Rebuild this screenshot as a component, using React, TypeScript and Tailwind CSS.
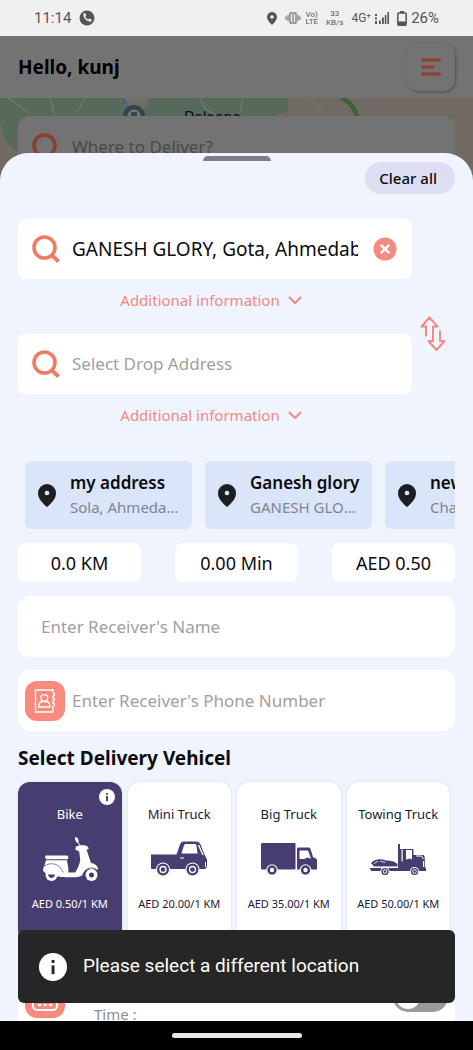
import { useState } from 'react';
import type { ReactNode } from 'react';

const savedAddresses = [
  { name: 'my address', detail: 'Sola, Ahmedabad, Gujarat' },
  { name: 'Ganesh glory', detail: 'GANESH GLORY, Gota' },
  { name: 'new home', detail: 'Chandkheda, Ahmedabad' },
];

const stats = ['0.0 KM', '0.00 Min', 'AED 0.50'];

const vehicles = [
  { name: 'Bike', price: 'AED 0.50/1 KM', icon: <ScooterIcon /> },
  { name: 'Mini Truck', price: 'AED 20.00/1 KM', icon: <MiniTruckIcon /> },
  { name: 'Big Truck', price: 'AED 35.00/1 KM', icon: <BigTruckIcon /> },
  { name: 'Towing Truck', price: 'AED 50.00/1 KM', icon: <TowTruckIcon /> },
];

function ScooterIcon() {
  return (
    <svg viewBox="0 0 56 46" className="h-[46px] w-[56px]" fill="currentColor" aria-hidden="true">
      {/* mirror + handlebar */}
      <path d="M33 1.500c2-.8 3.600 1 3.700 4.500l-.9 1.200C34 6 32.700 4 33 1.500z" />
      <path d="M35.500 6l3 4" stroke="currentColor" strokeWidth="1" />
      <path d="M34 10.500c3-1.500 7-1.500 9.500-1 2 .5 3 1.500 3 3.500l-2 .5 4.500 13.500c4 .5 7 3 7.200 6.500l-9-.5c-4 .5-6 3-7 6.500-3 2-10 2-22 1.500l-2-5 12 .5h5c2-3 5-9 5-13l-1-8-4-2z" />
      {/* seat */}
      <path d="M3.500 19.500h21c1.800 0 2.500 2 1.200 3.800H4.500c-1.500-1-1.500-2.700-1-3.800z" />
      <path d="M4 24.300h21l1.500 9.500c0 4-2 6-5 7L7 40l-6-5c0-2 .5-4 1.500-6z" />
      <path d="M2 30.500c5-4.500 16-4 19 6" fill="none" stroke="#483d71" strokeWidth=".7" />
      <circle cx="9.500" cy="39" r="6" />
      <path d="M6 38.500h7c-.5 4.500-6.500 4.500-7 0z" fill="#483d71" />
      <circle cx="49.500" cy="39" r="6" />
      <circle cx="49.500" cy="39" r="2.500" fill="#483d71" />
      <path d="M42 38c1-5 5-7.500 12-5" fill="none" stroke="#483d71" strokeWidth=".8" />
    </svg>
  );
}

function MiniTruckIcon() {
  return (
    <svg viewBox="0 0 56 36" className="h-[36px] w-[56px]" fill="currentColor" aria-hidden="true">
      <path d="M0 13.500h25.500L29 3.500C29.700 1.500 31 .5 33 .5h12c2.500 0 3.500 1 4.500 3l4 10 2.500 5v5c0 3-1 4.500-3 4.500H1c-.6 0-1-.4-1-1z" />
      <path d="M30.500 12.500l2.400-8c.3-1 .8-1.500 1.900-1.500h9.200c1 0 1.400.5 1.400 1.500l1.200 8z" fill="#fff" />
      <path d="M47.500 4l4.500 10" stroke="#fff" strokeWidth="1.400" />
      <path d="M29 17h4" stroke="#fff" strokeWidth="1" />
      <path d="M54.500 21v5" stroke="#fff" strokeWidth="1" />
      <circle cx="12" cy="28.500" r="7" fill="#fff" />
      <circle cx="12" cy="28.500" r="6" />
      <circle cx="12" cy="28.500" r="3" fill="none" stroke="#fff" strokeWidth="1.300" />
      <circle cx="41.500" cy="28.500" r="7" fill="#fff" />
      <circle cx="41.500" cy="28.500" r="6" />
      <circle cx="41.500" cy="28.500" r="3" fill="none" stroke="#fff" strokeWidth="1.300" />
    </svg>
  );
}

function BigTruckIcon() {
  return (
    <svg viewBox="0 0 56 32" className="h-[32px] w-[56px]" fill="currentColor" aria-hidden="true">
      <rect width="34.500" height="26.500" rx="1.200" />
      <path d="M36 26.500V6c0-1 .5-1.500 1.500-1.500h10c1 0 1.500.4 1.900 1.300L52 14l3 1.500c.7.400 1 1 1 1.500v8.500c0 .6-.4 1-1 1z" />
      <path d="M38.500 7.500h8.500l3 8-4-1-2.500 1.500h-5z" fill="#fff" />
      <circle cx="11" cy="27" r="5.800" fill="#fff" />
      <circle cx="11" cy="27" r="4.700" />
      <circle cx="11" cy="27" r="2.200" fill="#fff" />
      <circle cx="44.500" cy="27" r="5.800" fill="#fff" />
      <circle cx="44.500" cy="27" r="4.700" />
      <circle cx="44.500" cy="27" r="2.200" fill="#fff" />
    </svg>
  );
}

function TowTruckIcon() {
  return (
    <svg viewBox="0 0 56 33" className="h-[33px] w-[56px]" fill="currentColor" aria-hidden="true">
      <path d="M0 25h28V1h2v5h12c1 0 1.500.5 1.500 1.500V12H53c1 0 1.500 1 1.800 3v9.500H56V28H1z" />
      <path d="M1 20c4-4 9-4.500 15-2.500 5 0 9 1 11.500 3.500v2.500H4z" />
      <path d="M4 20.500l4-2.300M10 18l5 1.500" stroke="#fff" strokeWidth=".8" />
      <path d="M0 24.300h28" stroke="#fff" strokeWidth=".8" />
      <rect x="31.500" y="6.500" width="1.200" height="12" fill="#fff" />
      <path d="M36 7h6v9.500l-2-1-4 1z" fill="#fff" />
      <path d="M46 13h5.500l2 3M53.500 18v6" fill="none" stroke="#fff" strokeWidth="1" />
      <circle cx="15" cy="28.500" r="4.500" fill="#fff" />
      <circle cx="15" cy="28.500" r="3.600" />
      <circle cx="15" cy="28.500" r="1.800" fill="none" stroke="#fff" strokeWidth="1" />
      <circle cx="44.500" cy="28.500" r="4.500" fill="#fff" />
      <circle cx="44.500" cy="28.500" r="3.600" />
      <circle cx="44.500" cy="28.500" r="1.800" fill="none" stroke="#fff" strokeWidth="1" />
    </svg>
  );
}

function SearchIcon({ className }: { className: string }) {
  return (
    <svg viewBox="0 0 28 28" className={`h-7 w-7 shrink-0 ${className}`} fill="none" stroke="currentColor" aria-hidden="true">
      <circle cx="12.500" cy="12.500" r="10.500" strokeWidth="3.600" />
      <path d="M19.500 20l7 6.500" strokeWidth="4" />
    </svg>
  );
}

function InfoIcon({ className }: { className: string }) {
  return (
    <svg viewBox="0 0 28 28" className={className} aria-hidden="true">
      <circle cx="14" cy="14" r="14" fill="#fff" />
      <rect x="12.600" y="7" width="2.900" height="2.900" fill="#262626" />
      <rect x="12.600" y="12.400" width="2.900" height="8.800" fill="#262626" />
    </svg>
  );
}

function PinIcon() {
  return (
    <svg viewBox="0 0 18 23" className="h-[23px] w-[18px] shrink-0" aria-hidden="true">
      <path d="M9 0a9 9 0 0 0-9 9c0 6 5 10.500 9 14 4-3.500 9-8 9-14a9 9 0 0 0-9-9z" fill="#1d1e22" />
      <circle cx="9" cy="9" r="2.300" fill="#dae5f9" />
    </svg>
  );
}

function StatusBar() {
  return (
    <div className="flex h-9 shrink-0 items-center justify-between bg-[#f0f0f0] pr-[34px] pl-[34px] font-['Roboto',sans-serif] text-[#555]">
      <div className="flex items-center gap-2">
        <span className="text-[15px]">11:14</span>
        <svg viewBox="0 0 16 16" className="h-4 w-4" aria-hidden="true">
          <circle cx="8" cy="8" r="7.500" fill="#555" />
          <path d="M4.500 3.500l1.800-.4 1 2.300-1.100 1.200c.7 1.400 1.600 2.300 3 3l1.200-1.100 2.300 1-.3 1.900c-4.500.9-8.700-3.400-7.900-7.900z" fill="#f0f0f0" />
        </svg>
      </div>
      <div className="flex items-center gap-1">
        <svg viewBox="0 0 10 13" className="mr-1 h-[13px] w-[10px]" aria-hidden="true">
          <path d="M5 0a5 5 0 0 0-5 5c0 3 3 6 5 8 2-2 5-5 5-8a5 5 0 0 0-5-5z" fill="#555" />
          <circle cx="5" cy="5" r="1.800" fill="#f0f0f0" />
        </svg>
        <svg viewBox="0 0 16 12" className="h-3 w-4" fill="none" stroke="#555" aria-hidden="true">
          <rect x="5" y="1" width="6" height="10" />
          <path d="M7 3h2M7 5h2M7 7h2M7 9h2M3 3v6M13 3v6M1 4.500v3M15 4.500v3" />
        </svg>
        <div className="flex flex-col text-center text-[8px] leading-[7px]">
          <span>Vo)</span>
          <span>LTE</span>
        </div>
        <div className="mx-1 flex flex-col text-center text-[8px] leading-[9px]">
          <span>33</span>
          <span>KB/s</span>
        </div>
        <span className="text-xs">4G⁺</span>
        <svg viewBox="0 0 14 12" className="h-3 w-[14px]" fill="#555" aria-hidden="true">
          <path d="M0 2h2v2H0zM0 5.500h2v2H0zM0 9h2v3H0zM4 8.500h1.800V12H4zM7 5.500h1.800V12H7zM9.800 3h1.600v9H9.800zM12.400 0H14v12h-1.600z" />
        </svg>
        <svg viewBox="0 0 10 15" className="ml-1 h-[15px] w-[10px]" aria-hidden="true">
          <path d="M3 0h4v2H3z" fill="#555" />
          <rect x=".8" y="2" width="8.400" height="12.200" rx="1" fill="none" stroke="#555" strokeWidth="1.500" />
          <path d="M1 10.500h8V14H1z" fill="#555" />
        </svg>
        <span className="text-[15px]">26%</span>
      </div>
    </div>
  );
}

function MapStrip() {
  return (
    <div className="relative h-[92px] shrink-0 overflow-hidden bg-[#706a63]">
      <svg viewBox="0 0 473 92" preserveAspectRatio="xMidYMin slice" className="h-full w-full" aria-hidden="true">
        <path d="M0 0h288v12c-6 5-20 7-30 12v30H18C6 48 0 32 0 20z" fill="#56695a" />
        <path d="M124 0h26l-12 20h-8z" fill="#70706b" />
        <path d="M8 0l22 16M50 0l5 20M85 0l-8 14M200 0l6 12 16 8M243 0l-4 20M308 0l14 14" fill="none" stroke="#6d786c" strokeWidth="1.500" />
        <path d="M123 0l9 14" stroke="#48589a" strokeWidth="1.500" />
        <path d="M341 0c10 4 13 10 17 20" fill="none" stroke="#286329" strokeWidth="4" />
        <path d="M341 0c10 4 13 10 17 20" fill="none" stroke="#56695a" strokeWidth="1" />
        <circle cx="134" cy="18" r="11" fill="#37454a" />
        <circle cx="134" cy="18" r="6.500" fill="#70797b" />
        <path d="M131 14h6v7h-6z" fill="#37454a" />
        <text x="184" y="25" fontSize="16" fontFamily="Roboto, sans-serif" fill="#111">Palsana</text>
      </svg>
      <div className="absolute inset-x-[18px] top-[18px] flex h-[61px] items-center gap-3 rounded-xl bg-[#737373] pl-[14px]">
        <SearchIcon className="text-[#893f34]" />
        <span className="text-[17px] text-[#494949]">Where to Deliver?</span>
      </div>
    </div>
  );
}

function AddressField({ label, value, onChange, children }: {
  label: string;
  value: string;
  onChange: (value: string) => void;
  children?: ReactNode;
}) {
  return (
    <div>
      <label className="flex h-[60px] items-center rounded-lg bg-white pr-[15px] pl-[14px]">
        <SearchIcon className="text-[#f27a62]" />
        <input
          aria-label={label}
          placeholder={label}
          value={value}
          onChange={(e) => onChange(e.target.value)}
          className={`ml-3 min-w-0 flex-1 bg-transparent outline-none placeholder:text-[#a0a0a0] ${value ? 'text-[19px]' : 'text-[17px]'}`}
        />
        {children}
      </label>
      <button className="mx-auto flex h-[42px] items-center gap-2 pr-2 text-[15px] text-[#ef8a80]">
        Additional information
        <svg viewBox="0 0 14 8" className="h-2 w-[14px]" fill="none" stroke="currentColor" strokeWidth="2" aria-hidden="true">
          <path d="M1 1l6 6 6-6" />
        </svg>
      </button>
    </div>
  );
}

export default function App() {
  const [pickup, setPickup] = useState('GANESH GLORY, Gota, Ahmedabad, Gujarat');
  const [drop, setDrop] = useState('');
  const [selected, setSelected] = useState('Bike');

  return (
    <div className="relative flex h-screen flex-col overflow-hidden bg-[#737373] font-['Noto_Sans',sans-serif] text-[#0b0b0f]">
      <StatusBar />

      <header className="flex h-[62px] shrink-0 items-center justify-between px-[18px]">
        <h1 className="text-[19px] font-bold text-black">Hello, kunj</h1>
        <button aria-label="Menu" className="flex h-12 w-12 items-center justify-center rounded-xl bg-[#737373] shadow-[1px_1px_3px_rgba(0,0,0,0.3)]">
          <svg viewBox="0 0 20 18" className="h-[18px] w-5" stroke="#8d413c" strokeWidth="3.600" strokeLinecap="round" aria-hidden="true">
            <path d="M1.800 2h16.400M1.800 9h10M1.800 16h16.400" />
          </svg>
        </button>
      </header>

      <MapStrip />

      {/* bottom sheet, pulled up over the map */}
      <main className="relative -mt-[37px] min-h-0 flex-1 overflow-hidden rounded-t-[28px] bg-[#f0f4fe] px-[18px]">
        <div className="mx-auto mt-[3px] h-[5px] w-[68px] rounded-t-full bg-[#7c7f86]" />
        <div className="flex justify-end">
          <button className="mt-px h-8 rounded-full bg-[#dddef3] pr-[18px] pl-[14px] text-[15px] font-medium">Clear all</button>
        </div>

        <div className="mt-[25px] flex items-stretch">
          <div className="flex min-w-0 flex-1 flex-col gap-[13px]">
            <AddressField label="Select Pickup Address" value={pickup} onChange={setPickup}>
              <button aria-label="Clear pickup address" onClick={() => setPickup('')} className="ml-[15px]">
                <svg viewBox="0 0 24 24" className="h-6 w-6" aria-hidden="true">
                  <circle cx="12" cy="12" r="11.500" fill="#f58a7e" />
                  <path d="M7.800 7.800l8.400 8.400M16.200 7.800l-8.400 8.400" stroke="#fff" strokeWidth="2.400" />
                </svg>
              </button>
            </AddressField>
            <AddressField label="Select Drop Address" value={drop} onChange={setDrop} />
          </div>
          <button aria-label="Swap addresses" className="mt-[97px] h-9 w-[43px] shrink-0 pl-2">
            <svg viewBox="0 0 26 36" className="h-9 w-[26px]" fill="none" stroke="#f08a84" strokeWidth="2" strokeLinejoin="round" aria-hidden="true">
              <path d="M6 20.500V10.500H1.500L9.500 1.500l8 9h-4.500v14.500H8.500l8 9 8-9h-4.500V14.500" />
            </svg>
          </button>
        </div>

        {/* saved addresses */}
        <div className="mt-[25px] flex gap-[13px] overflow-hidden pl-[7px]">
          {savedAddresses.map((address) => (
            <button key={address.name} className="flex h-[68px] w-[167px] shrink-0 items-center gap-[14px] rounded-md bg-[#dae5f9] pr-2.5 pl-[13px] text-left">
              <PinIcon />
              <span className="min-w-0 flex-1">
                <span className="block text-[17px] leading-6 font-semibold whitespace-nowrap">{address.name}</span>
                <span className="block truncate text-[15px] leading-6 text-[#7e8490]">{address.detail}</span>
              </span>
            </button>
          ))}
        </div>

        {/* trip summary */}
        <div className="mt-[14px] flex justify-between">
          {stats.map((stat) => (
            <div key={stat} className="flex h-[39px] w-[123px] items-center justify-center rounded-lg bg-white text-lg">{stat}</div>
          ))}
        </div>

        <input
          aria-label="Enter Receiver’s Name"
          placeholder="Enter Receiver's Name"
          className="mt-[14px] block h-[61px] w-full rounded-xl bg-white px-[23px] text-[17px] outline-none placeholder:text-[#a0a0a0]"
        />

        <label className="mt-[13px] flex h-[61px] items-center gap-[7px] rounded-xl bg-white px-[7px]">
          <span className="flex h-10 w-10 shrink-0 items-center justify-center rounded-xl bg-[#f98b7e]">
            <svg viewBox="0 0 22 24" className="h-6 w-[22px]" fill="none" stroke="#fff" strokeWidth="1.300" aria-hidden="true">
              <path d="M19 4V1H1.500v22H19v-3M19 4c2 0 2 3 0 3v2c2 0 2 3 0 3v2c2 0 2 3 0 3v3" />
              <path d="M4.500 18c0-3.500 1.500-5 3.500-5.500h4.500c2 .5 3.500 2 3.500 5.500z" />
              <circle cx="10.300" cy="9" r="3.400" />
            </svg>
          </span>
          <input
            type="tel"
            aria-label="Enter Receiver’s Phone Number"
            placeholder="Enter Receiver's Phone Number"
            className="min-w-0 flex-1 bg-transparent text-[17px] outline-none placeholder:text-[#a0a0a0]"
          />
        </label>

        <h2 className="mt-[13px] text-[19px] leading-7 font-bold">Select Delivery Vehicel</h2>

        <div className="mt-[10px] mr-[5px] grid grid-cols-4 gap-1.5">
          {vehicles.map((vehicle) => (
            <button
              key={vehicle.name}
              onClick={() => setSelected(vehicle.name)}
              className={`relative flex h-[160px] flex-col items-center rounded-xl pt-[22px] shadow-[0_0_2px_rgba(120,140,180,0.35)] ${
                vehicle.name === selected ? 'bg-[#483d71] text-white' : 'bg-white text-[#483d71]'
              }`}
            >
              {vehicle.name === selected && <InfoIcon className="absolute top-[7px] right-[7px] h-4 w-4" />}
              <span className={`text-[13px] leading-5 ${vehicle.name === selected ? '' : 'text-[#1c1838]'}`}>{vehicle.name}</span>
              <span className="my-1 flex h-[62px] items-center">{vehicle.icon}</span>
              <span className={`text-[11px] leading-5 whitespace-nowrap ${vehicle.name === selected ? '' : 'text-[#1c1838]'}`}>{vehicle.price}</span>
            </button>
          ))}
        </div>

        {/* schedule row, mostly under the snackbar */}
        <div className="mt-[14px] flex h-[90px] items-start justify-between rounded-xl bg-white px-[7px] pt-[22px]">
          <span className="flex h-10 w-10 items-center justify-center rounded-xl bg-[#f98b7e]">
            <svg viewBox="0 0 26 26" className="h-[26px] w-[26px]" fill="none" stroke="#fff" strokeWidth="2" aria-hidden="true">
              <rect x="1" y="3" width="24" height="22" rx="4" />
              <path d="M1 9h24" />
              <path d="M6 15h14M6 20h14" strokeDasharray="3 2.500" />
            </svg>
          </span>
          <label htmlFor="schedule" className="mt-6 ml-[29px] flex-1 text-[15px] leading-6 text-[#8e8e93]">Time :</label>
          <input
            id="schedule"
            type="checkbox"
            role="switch"
            className="mt-1 h-[30px] w-[55px] appearance-none rounded-full bg-[#9b9b9b] before:m-[3px] before:block before:h-6 before:w-6 before:rounded-full before:bg-white"
          />
        </div>
      </main>

      <div role="status" className="absolute inset-x-[18px] bottom-[47px] flex h-[73px] items-center gap-4 rounded-md bg-[#262626] pl-[21px] font-['Roboto',sans-serif] text-[19px] text-white">
        <InfoIcon className="h-7 w-7" />
        Please select a different location
      </div>

      {/* gesture bar */}
      <div className="flex h-[29px] shrink-0 items-center justify-center bg-black">
        <div className="h-[5px] w-[130px] rounded-full bg-[#e8e8e8]" />
      </div>
    </div>
  );
}
